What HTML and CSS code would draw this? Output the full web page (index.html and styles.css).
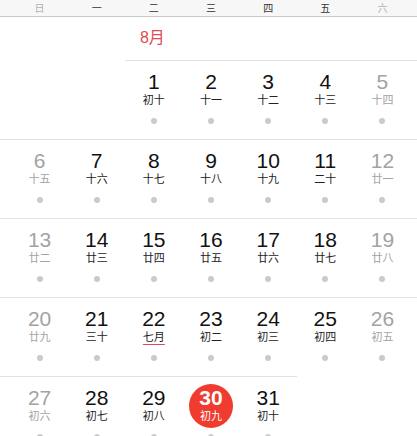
FILE: index.html
```html
<!DOCTYPE html>
<html lang="zh">
<head>
<meta charset="utf-8">
<link rel="stylesheet" href="styles.css">
</head>
<body>
<div class="cal">
  <div class="grid weekdays">
    <span></span>
    <span class="wk off">日</span><span class="wk">一</span><span class="wk">二</span><span class="wk">三</span><span class="wk">四</span><span class="wk">五</span><span class="wk off">六</span>
    <span></span>
  </div>
  <div class="grid month-row"><span class="month">8月</span></div>

  <div class="grid week">
    <span class="blank"></span><span class="blank"></span><span class="blank"></span>
    <div class="day"><span class="num">1</span><span class="lunar">初十</span><span class="dot"></span></div>
    <div class="day"><span class="num">2</span><span class="lunar">十一</span><span class="dot"></span></div>
    <div class="day"><span class="num">3</span><span class="lunar">十二</span><span class="dot"></span></div>
    <div class="day"><span class="num">4</span><span class="lunar">十三</span><span class="dot"></span></div>
    <div class="day off"><span class="num">5</span><span class="lunar">十四</span><span class="dot"></span></div>
    <span></span>
  </div>

  <div class="grid week">
    <span></span>
    <div class="day off"><span class="num">6</span><span class="lunar">十五</span><span class="dot"></span></div>
    <div class="day"><span class="num">7</span><span class="lunar">十六</span><span class="dot"></span></div>
    <div class="day"><span class="num">8</span><span class="lunar">十七</span><span class="dot"></span></div>
    <div class="day"><span class="num">9</span><span class="lunar">十八</span><span class="dot"></span></div>
    <div class="day"><span class="num">10</span><span class="lunar">十九</span><span class="dot"></span></div>
    <div class="day"><span class="num">11</span><span class="lunar">二十</span><span class="dot"></span></div>
    <div class="day off"><span class="num">12</span><span class="lunar">廿一</span><span class="dot"></span></div>
    <span></span>
  </div>

  <div class="grid week">
    <span></span>
    <div class="day off"><span class="num">13</span><span class="lunar">廿二</span><span class="dot"></span></div>
    <div class="day"><span class="num">14</span><span class="lunar">廿三</span><span class="dot"></span></div>
    <div class="day"><span class="num">15</span><span class="lunar">廿四</span><span class="dot"></span></div>
    <div class="day"><span class="num">16</span><span class="lunar">廿五</span><span class="dot"></span></div>
    <div class="day"><span class="num">17</span><span class="lunar">廿六</span><span class="dot"></span></div>
    <div class="day"><span class="num">18</span><span class="lunar">廿七</span><span class="dot"></span></div>
    <div class="day off"><span class="num">19</span><span class="lunar">廿八</span><span class="dot"></span></div>
    <span></span>
  </div>

  <div class="grid week">
    <span></span>
    <div class="day off"><span class="num">20</span><span class="lunar">廿九</span><span class="dot"></span></div>
    <div class="day"><span class="num">21</span><span class="lunar">三十</span><span class="dot"></span></div>
    <div class="day"><span class="num">22</span><span class="lunar festival">七月</span><span class="dot"></span></div>
    <div class="day"><span class="num">23</span><span class="lunar">初二</span><span class="dot"></span></div>
    <div class="day"><span class="num">24</span><span class="lunar">初三</span><span class="dot"></span></div>
    <div class="day"><span class="num">25</span><span class="lunar">初四</span><span class="dot"></span></div>
    <div class="day off"><span class="num">26</span><span class="lunar">初五</span><span class="dot"></span></div>
    <span></span>
  </div>

  <div class="grid week">
    <span></span>
    <div class="day off"><span class="num">27</span><span class="lunar">初六</span><span class="dot"></span></div>
    <div class="day"><span class="num">28</span><span class="lunar">初七</span><span class="dot"></span></div>
    <div class="day"><span class="num">29</span><span class="lunar">初八</span><span class="dot"></span></div>
    <div class="day today"><span class="badge"><span class="num">30</span><span class="lunar">初九</span></span><span class="dot"></span></div>
    <div class="day"><span class="num">31</span><span class="lunar">初十</span><span class="dot"></span></div>
    <span class="blank"></span><span class="blank"></span><span class="blank"></span>
  </div>
</div>
</body>
</html>
```

FILE: styles.css
```css
* { box-sizing: border-box; margin: 0; padding: 0; }
html, body { background: #fff; }
body {
  margin: 0;
  width: 417px;
  height: 436px;
  overflow: hidden;
  font-family: "Liberation Sans", "Noto Sans CJK SC", sans-serif;
}
.grid {
  display: grid;
  grid-template-columns: 11px repeat(7, 1fr) 6px;
}
.weekdays {
  height: 17px;
  background: #f7f7f7;
  border-bottom: 1px solid #c9c9c9;
  align-items: center;
}
.wk {
  text-align: center;
  font-family: "Noto Sans CJK SC", sans-serif;
  font-size: 10px;
  line-height: 16px;
  color: #333;
}
.wk.off { color: #b0b0b0; }
.month-row {
  height: 43px;
  align-items: center;
}
.month {
  grid-column: 4;
  justify-self: center;
  margin-left: -3px;
  font-family: "Liberation Sans", "Noto Sans CJK SC", sans-serif;
  font-size: 16px;
  line-height: 20px;
  margin-top: -2px;
  color: #df4a50;
}
.week > * { border-top: 1px solid #e2e2e2; }
.week > .blank { border-top-color: transparent; }
.day {
  height: 79px;
  padding-top: 10px;
  display: flex;
  flex-direction: column;
  align-items: center;
}
.num {
  font-size: 21px;
  line-height: 22px;
  color: #111;
}
.lunar {
  font-family: "Noto Sans CJK SC", sans-serif;
  font-size: 11px;
  line-height: 12px;
  color: #222;
}
.festival {
  text-decoration: underline 1px #d94c4c;
  text-underline-offset: 3px;
}
.dot {
  width: 6px;
  height: 6px;
  border-radius: 50%;
  background: #cacaca;
  margin-top: 12.5px;
}
.day.off .num, .day.off .lunar { color: #a3a3a3; }
.day.today { padding-top: 7px; }
.badge {
  width: 44px;
  height: 44px;
  border-radius: 50%;
  background: #f03b2f;
  padding-top: 3px;
  display: flex;
  flex-direction: column;
  align-items: center;
}
.today .num { color: #fff; font-weight: bold; }
.today .lunar { color: #fff; }
.today .dot { margin-top: 5.5px; }
```
